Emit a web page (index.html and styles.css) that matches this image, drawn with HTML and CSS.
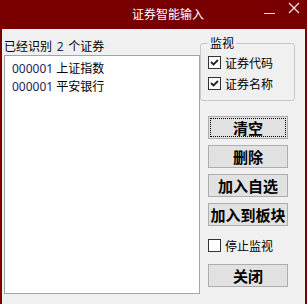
FILE: index.html
```html
<!DOCTYPE html>
<html lang="zh-CN">
<head>
<meta charset="UTF-8">
<title>证券智能输入</title>
<link rel="stylesheet" href="styles.css">
</head>
<body>

<div class="window">
    <div class="titlebar">
        <div class="title">证券智能输入</div>
        <div class="controls">
            <svg class="ctl" width="20" height="20" viewBox="0 0 20 20"><line x1="4" y1="13.5" x2="15" y2="13.5" stroke="#f0e0e0" stroke-width="1"/></svg>
            <svg class="ctl" width="20" height="20" viewBox="0 0 20 20"><path d="M4 8 L14 18 M14 8 L4 18" stroke="#f0e0e0" stroke-width="1.3"/></svg>
        </div>
    </div>

    <div class="content">
        <div class="left">
            <div class="found">已经识别 <span class="num">2</span> 个证券</div>
            <div class="listbox">
                <div class="item"><span class="num">000001</span> 上证指数</div>
                <div class="item"><span class="num">000001</span> 平安银行</div>
            </div>
        </div>

        <div class="right">
            <fieldset class="group">
                <legend>监视</legend>
                <label class="check"><span class="box"><svg width="11" height="11" viewBox="0 0 11 11"><polyline points="2,5 4.5,7.5 9,3" fill="none" stroke="#222" stroke-width="1.8"/></svg></span>证券代码</label>
                <label class="check"><span class="box"><svg width="11" height="11" viewBox="0 0 11 11"><polyline points="2,5 4.5,7.5 9,3" fill="none" stroke="#222" stroke-width="1.8"/></svg></span>证券名称</label>
            </fieldset>

            <button class="btn focus">清空</button>
            <button class="btn">删除</button>
            <button class="btn">加入自选</button>
            <button class="btn">加入到板块</button>

            <label class="check stop"><span class="box"></span>停止监视</label>

            <button class="btn close">关闭</button>
        </div>
    </div>
</div>

</body>
</html>
```

FILE: styles.css
```css
body {
    margin: 0;
    font-family: "Noto Sans", "Noto Sans CJK SC", sans-serif;
    font-size: 12px;
    color: #000;
}
.window {
    width: 307px;
    height: 304px;
    box-sizing: border-box;
    border-left: 2px solid #780000;
    border-right: 2px solid #780000;
    background: #f0f0f0;
    overflow: hidden;
}
.titlebar {
    height: 29px;
    display: flex;
    align-items: center;
    background: #780000;
    color: #fff;
}
.title {
    flex: 1;
    text-align: center;
    padding-left: 77px;
    font-family: "Noto Sans CJK SC", sans-serif;
    font-size: 12px;
    line-height: 16px;
    padding-bottom: 1px;
}
.controls {
    width: 48px;
    display: flex;
    align-items: flex-start;
    align-self: flex-start;
}
.ctl {
    display: block;
}
.controls .ctl:first-child {
    margin-left: 3px;
}
.controls .ctl:last-child {
    margin-left: 5px;
    margin-top: -5px;
}
.content {
    display: flex;
    padding: 8px 0 0 2px;
}
.left {
    width: 196px;
}
.found {
    line-height: 17px;
    font-family: "Noto Sans CJK SC", sans-serif;
    word-spacing: 2px;
}
.num {
    font-family: "Noto Sans", sans-serif;
    color: #1e1e5a;
}
.listbox {
    height: 239px;
    box-sizing: border-box;
    border: 1px solid #a5a5a5;
    background: #fff;
    padding: 4px 0 0 7px;
}
.item {
    line-height: 18px;
    font-family: "Noto Sans", "Noto Sans CJK SC", sans-serif;
}
.right {
    width: 95px;
    display: flex;
    flex-direction: column;
}
.group {
    margin: -2px 0 0 0;
    padding: 1px 0 6px 7px;
    border: 1px solid #c8c8c8;
    border-radius: 3px;
}
.group legend {
    margin-left: 0;
    padding: 0 2px;
    line-height: 16px;
    font-family: "Noto Sans CJK SC", sans-serif;
}
.check {
    display: flex;
    align-items: center;
    height: 21px;
    font-family: "Noto Sans CJK SC", sans-serif;
}
.box {
    width: 13px;
    height: 13px;
    box-sizing: border-box;
    border: 1px solid #333;
    background: #fff;
    margin-right: 4px;
    display: flex;
    align-items: center;
    justify-content: center;
}
.box svg {
    display: block;
}
.btn {
    width: 80px;
    height: 23px;
    margin: 6px 0 0 8px;
    padding: 0;
    background: #e1e1e1;
    border: 1px solid #adadad;
    font-family: "Noto Sans CJK SC", sans-serif;
    font-size: 15px;
    font-weight: bold;
    line-height: 20px;
    color: #000;
}
.btn.focus {
    margin-top: 15px;
    outline: 1px dotted #000;
    outline-offset: -3px;
}
.stop {
    margin: 9px 0 0 8px;
    height: 20px;
}
.btn.close {
    margin-top: 9px;
}
```
